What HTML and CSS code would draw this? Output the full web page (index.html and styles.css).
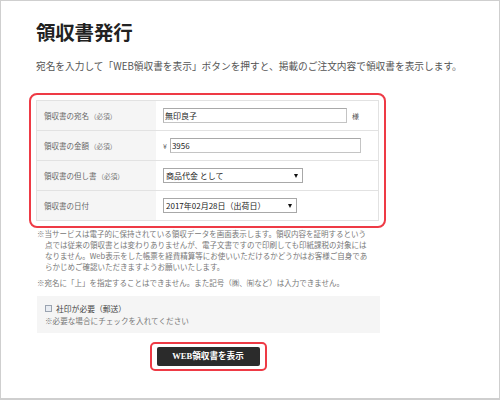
FILE: index.html
```html
<!DOCTYPE html>
<html lang="ja">
<head>
<meta charset="utf-8">
<title>領収書発行</title>
<link rel="stylesheet" href="styles.css">
</head>
<body>
<div class="page">
  <h1 class="title">領収書発行</h1>
  <p class="lead">宛名を入力して「WEB領収書を表示」ボタンを押すと、掲載のご注文内容で領収書を表示します。</p>

  <div class="highlight">
    <div class="form-table">
      <div class="row">
        <div class="label">領収書の宛名<span class="req">（必須）</span></div>
        <div class="value">
          <input class="text name" type="text" value="無印良子">
          <span class="suffix">様</span>
        </div>
      </div>
      <div class="row">
        <div class="label">領収書の金額<span class="req">（必須）</span></div>
        <div class="value">
          <span class="yen">¥</span>
          <input class="text amount" type="text" value="3956">
        </div>
      </div>
      <div class="row">
        <div class="label">領収書の但し書<span class="req">（必須）</span></div>
        <div class="value">
          <div class="select proviso">
            <select><option>商品代金 として</option></select>
            <span class="arrow"></span>
          </div>
        </div>
      </div>
      <div class="row last">
        <div class="label">領収書の日付</div>
        <div class="value">
          <div class="select date">
            <select><option>2017年02月28日（出荷日）</option></select>
            <span class="arrow"></span>
          </div>
        </div>
      </div>
    </div>
  </div>

  <div class="notes">
    <p class="note">※当サービスは電子的に保持されている領収データを画面表示します。領収内容を証明するという<br>点では従来の領収書とは変わりありませんが、電子文書ですので印刷しても印紙課税の対象には<br>なりません。Web表示をした帳票を経費精算等にお使いいただけるかどうかはお客様ご自身であ<br>らかじめご確認いただきますようお願いいたします。</p>
    <p class="note second">※宛名に「上」を指定することはできません。また記号（㈱、㈲など）は入力できません。</p>
  </div>

  <div class="stamp-box">
    <label class="stamp-line"><input class="check" type="checkbox"><span>社印が必要（郵送）</span></label>
    <p class="stamp-note">※必要な場合にチェックを入れてください</p>
  </div>

  <div class="actions">
    <div class="btn-ring">
      <button class="btn" type="button">WEB領収書を表示</button>
    </div>
  </div>
</div>
</body>
</html>
```

FILE: styles.css
```css
* {
  box-sizing: border-box;
}

html, body {
  margin: 0;
  padding: 0;
  background: #fff;
}

body {
  font-family: "Noto Sans CJK JP", "Noto Sans", sans-serif;
  color: #333;
}

.page {
  width: 500px;
  height: 400px;
  border: 1px solid #cfcfcf;
  border-bottom-width: 2px;
  padding: 0 0 0 35px;
  overflow: hidden;
}

.title {
  margin: 19px 0 0;
  font-size: 19.5px;
  line-height: 24px;
  font-weight: bold;
  color: #222;
  letter-spacing: -0.2px;
}

.lead {
  margin: 15px 0 0;
  font-size: 9.7px;
  line-height: 14px;
  color: #555;
  white-space: nowrap;
}

.highlight {
  margin: 20px 0 0 -7px;
  width: 357px;
  border: 2px solid #ee3a45;
  border-radius: 8px;
  padding: 5px;
}

.form-table {
  border: 1px solid #e2e2e2;
}

.row {
  display: grid;
  grid-template-columns: 119px 1fr;
  height: 30px;
  border-bottom: 1px solid #e2e2e2;
}

.row.last {
  height: 29px;
  border-bottom: 0;
}

.label {
  background: #f5f5f5;
  display: flex;
  align-items: center;
  padding-left: 7px;
  font-size: 7.5px;
  color: #666;
  white-space: nowrap;
}

.req {
  font-size: 6.6px;
  color: #777;
  margin-left: 1px;
}

.value {
  display: flex;
  align-items: center;
  padding-left: 7px;
  background: #fff;
}

.text {
  height: 15px;
  border: 1px solid #c4c4c4;
  border-top-color: #a9a9a9;
  border-left-color: #b5b5b5;
  padding: 0 1px;
  font-family: "Noto Sans CJK JP", sans-serif;
  font-size: 8px;
  color: #222;
  background: #fff;
  outline: none;
}

.name {
  width: 184px;
}

.suffix {
  margin-left: 5px;
  font-size: 7px;
  color: #555;
}

.yen {
  font-size: 7px;
  color: #555;
  margin-right: 3px;
}

.amount {
  width: 191px;
}

.select {
  position: relative;
  height: 15px;
}

.select select {
  display: block;
  appearance: none;
  -webkit-appearance: none;
  width: 100%;
  height: 15px;
  margin: 0;
  border: 1px solid #a8a8a8;
  border-radius: 0;
  background: #fff;
  padding: 0 0 0 2px;
  font-family: "Noto Sans CJK JP", sans-serif;
  font-size: 8px;
  line-height: 13px;
  color: #222;
}

.proviso {
  width: 140px;
}

.date {
  width: 134px;
}

.arrow {
  position: absolute;
  right: 5px;
  top: 5.5px;
  width: 0;
  height: 0;
  border-left: 2.5px solid transparent;
  border-right: 2.5px solid transparent;
  border-top: 4px solid #111;
}

.notes {
  margin-left: 1px;
}

.note {
  margin: 0;
  font-size: 7.5px;
  line-height: 11px;
  color: #777;
  padding-left: 8px;
  text-indent: -8px;
  white-space: nowrap;
}

.note.second {
  margin-top: 5px;
}

.stamp-box {
  margin-top: 8px;
  margin-left: 1px;
  width: 343px;
  height: 37px;
  background: #f5f5f5;
  padding: 7px 0 0 8px;
}

.stamp-line {
  display: flex;
  align-items: center;
  height: 11px;
  font-size: 7.8px;
  color: #444;
}

.check {
  appearance: none;
  -webkit-appearance: none;
  width: 7px;
  height: 7px;
  margin: 0 4px 0 0;
  border: 1px solid #9aa3b0;
  background: #e8ecf2;
}

.stamp-note {
  margin: 1px 0 0;
  font-size: 7.6px;
  line-height: 11px;
  color: #777;
}

.actions {
  width: 344px;
  display: flex;
  justify-content: center;
  margin-top: 9px;
}

.btn-ring {
  border: 2px solid #ee3a45;
  border-radius: 5px;
  padding: 3px 5px;
}

.btn {
  display: block;
  width: 103px;
  height: 19px;
  border: 0;
  border-radius: 2px;
  background: #2b2b2b;
  color: #fff;
  font-family: "Liberation Serif", "Noto Sans CJK JP", serif;
  font-weight: bold;
  font-size: 8.6px;
  padding: 0;
  line-height: 19px;
}
```
